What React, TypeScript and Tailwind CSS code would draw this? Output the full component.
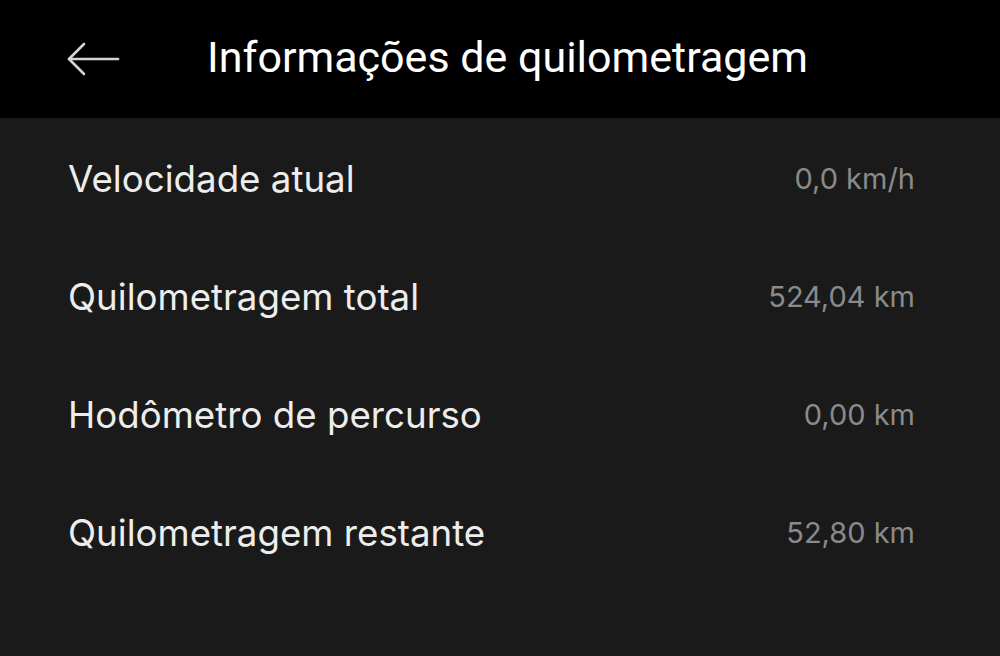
import React from "react"

const rows = [
  { label: "Velocidade atual", value: "0,0 km/h" },
  { label: "Quilometragem total", value: "524,04 km" },
  { label: "Hodômetro de percurso", value: "0,00 km" },
  { label: "Quilometragem restante", value: "52,80 km" },
]

export default function App() {
  return (
    <div className="w-[1000px] h-[656px] bg-[#1a1a1a] overflow-hidden" style={{ fontFamily: "Inter, 'Noto Sans', sans-serif" }}>
      <div className="h-[118px] bg-black flex items-center">
        <div className="w-[207px] pl-[66px] flex items-center">
          <svg width="54" height="34" viewBox="0 0 54 34" fill="none" stroke="#d4d4d4" strokeWidth="2.6" strokeLinecap="round" strokeLinejoin="round">
            <path d="M52 17H3" />
            <path d="M18 2L3 17l15 15" />
          </svg>
        </div>
        <h1 className="text-white text-[43px] pb-[4px]" style={{ fontFamily: "Roboto, 'Noto Sans', sans-serif" }}>
          Informações de quilometragem
        </h1>
      </div>
      <div className="pt-[2px]">
        {rows.map((row) => (
          <div key={row.label} className="h-[118px] flex items-center justify-between pl-[68px] pr-[85px]">
            <span className="text-[#ededed] text-[36.7px]">{row.label}</span>
            <span className="text-[#8a8a8a] text-[29px]">{row.value}</span>
          </div>
        ))}
      </div>
    </div>
  )
}
